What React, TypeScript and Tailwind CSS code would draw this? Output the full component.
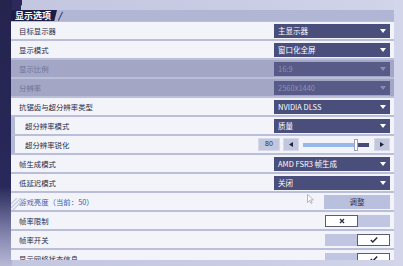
import React from "react";

type Kind = "select" | "disabled" | "slider" | "button" | "off" | "on";

type Row = {
  label: string;
  kind: Kind;
  value?: string;
  indent?: boolean;
  highlight?: boolean;
};

const rows: Row[] = [
  { label: "目标显示器", kind: "select", value: "主显示器" },
  { label: "显示模式", kind: "select", value: "窗口化全屏" },
  { label: "显示比例", kind: "disabled", value: "16:9" },
  { label: "分辨率", kind: "disabled", value: "2560x1440" },
  { label: "抗锯齿与超分辨率类型", kind: "select", value: "NVIDIA DLSS" },
  { label: "超分辨率模式", kind: "select", value: "质量", indent: true },
  { label: "超分辨率锐化", kind: "slider", value: "80", indent: true },
  { label: "帧生成模式", kind: "select", value: "AMD FSR3 帧生成" },
  { label: "低延迟模式", kind: "select", value: "关闭" },
  { label: "游戏亮度（当前：50）", kind: "button", value: "调整", highlight: true },
  { label: "帧率限制", kind: "off" },
  { label: "帧率开关", kind: "on" },
  { label: "显示网络状态信息", kind: "on" },
];

function Caret({ dim }: { dim?: boolean }) {
  return (
    <svg width="6" height="4" viewBox="0 0 6 4">
      <path d="M0 0h6L3 4z" fill={dim ? "#8a8db0" : "#ffffff"} />
    </svg>
  );
}

function Dropdown({ value, dim }: { value: string; dim?: boolean }) {
  return (
    <div
      className={`w-[116px] h-[14px] flex items-center justify-between pl-[4px] pr-[4px] text-[7.5px] leading-none ${
        dim ? "bg-[#585b88] text-[#8d90b2]" : "bg-[#4a4e7b] text-white"
      }`}
    >
      <span>{value}</span>
      <Caret dim={dim} />
    </div>
  );
}

function Slider({ value }: { value: string }) {
  return (
    <div className="flex items-center h-[13px]">
      <div className="w-[22px] h-[13px] bg-[#c3c7de] border border-[#d6d9ea] flex items-center justify-center text-[7px] text-[#2d2f4d] font-['Liberation_Sans',sans-serif]">
        {value}
      </div>
      <div className="ml-[3px] w-[16px] h-[13px] bg-[#c3c7de] border border-[#d6d9ea] flex items-center justify-center">
        <svg width="4" height="5" viewBox="0 0 4 5">
          <path d="M4 0v5L0 2.5z" fill="#23243d" />
        </svg>
      </div>
      <div className="ml-[4px] w-[66px] h-[4px] bg-[#474b78] relative">
        <div className="h-full w-[53px] bg-[#95b9ea]" />
        <div className="absolute left-[51px] top-[-4px] w-[4px] h-[12px] bg-white border border-[#9aa0bd]" />
      </div>
      <div className="ml-[5px] w-[16px] h-[13px] bg-[#c3c7de] border border-[#d6d9ea] flex items-center justify-center">
        <svg width="4" height="5" viewBox="0 0 4 5">
          <path d="M0 0v5L4 2.5z" fill="#23243d" />
        </svg>
      </div>
    </div>
  );
}

function Toggle({ on }: { on: boolean }) {
  const box = (
    <div className="w-[33px] h-full bg-white border border-[#5a5d72] flex items-center justify-center">
      {on ? (
        <svg width="8" height="6" viewBox="0 0 8 6">
          <path d="M0.8 3l2 2L7.2 0.6" stroke="#23243d" strokeWidth="1.4" fill="none" />
        </svg>
      ) : (
        <svg width="6" height="6" viewBox="0 0 6 6">
          <path d="M1 1l4 4M5 1L1 5" stroke="#2b2c48" strokeWidth="1.3" />
        </svg>
      )}
    </div>
  );
  return (
    <div className="w-[65px] h-[12px] flex bg-[#c0c6e1]">
      {on ? (
        <>
          <div className="flex-1" />
          {box}
        </>
      ) : (
        <>
          {box}
          <div className="flex-1" />
        </>
      )}
    </div>
  );
}

function SettingRow({ row }: { row: Row }) {
  const dim = row.kind === "disabled";
  return (
    <div className={`relative h-[17px] shrink-0 flex items-center ${dim ? "bg-[#a3a6c5]" : "bg-[#f3f4f9]"}`}>
      {row.indent && <div className="w-[4px] h-full bg-[#b4b9d7]" />}
      <span
        className={`text-[7.4px] leading-none ${row.indent ? "ml-[10px]" : "ml-[8px]"} ${
          dim ? "text-[#6f7398]" : row.highlight ? "text-[#3c5cae]" : "text-[#2a2c48]"
        }`}
      >
        {row.label}
      </span>
      {row.highlight && (
        <svg className="absolute left-0 bottom-0" width="14" height="12" viewBox="0 0 14 12">
          <path d="M0 6L6 0M0 10L10 0M0 14L14 0" stroke="#c5cbe3" strokeWidth="1.3" />
        </svg>
      )}
      <div className="ml-auto mr-[4px] flex items-center">
        {(row.kind === "select" || row.kind === "disabled") && <Dropdown value={row.value!} dim={dim} />}
        {row.kind === "slider" && <Slider value={row.value!} />}
        {row.kind === "button" && (
          <div className="w-[66px] h-[14px] bg-[#b9c0dd] flex items-center justify-center text-[7.5px] text-[#2d2f4d]">
            {row.value}
          </div>
        )}
        {row.kind === "off" && <Toggle on={false} />}
        {row.kind === "on" && <Toggle on />}
      </div>
    </div>
  );
}

export default function App() {
  return (
    <div className="relative w-[403px] h-[266px] overflow-hidden bg-[linear-gradient(90deg,#c3c6df_0%,#c9cce3_60%,#d2d5ea_100%)] font-['Noto_Sans_CJK_SC',sans-serif]">
      {/* left dark strip */}
      <div className="absolute left-0 top-0 w-[12px] h-full bg-[linear-gradient(180deg,#25244f_0%,#28285a_70%,#8c8db6_90%,#b7b9d6_100%)]" />
      <div className="absolute left-[12px] top-0 w-[24px] h-[10px] bg-[linear-gradient(100deg,#2b2a5a_40%,transparent_41%)]" />
      {/* right light strip */}
      <div className="absolute right-0 top-0 w-[9px] h-full bg-[#d3d6ea]" />

      <div className="relative ml-[11px] w-[383px] pt-[10px]">
        <div className="h-[11px] bg-[#b2b6d5] flex items-center">
          <div className="h-full bg-[#1d1e46] pl-[4px] pr-[6px] flex items-center [clip-path:polygon(0_0,100%_0,94%_100%,0_100%)]">
            <span className="text-[9px] leading-none font-bold text-white">显示选项</span>
          </div>
          <span className="ml-[1px] text-[9px] leading-none text-[#1d1e46] italic font-bold">/</span>
        </div>
        <div className="pt-[1px] h-[239px] overflow-hidden flex flex-col gap-[2px] bg-[#babed9]">
          {rows.map((r) => (
            <SettingRow key={r.label} row={r} />
          ))}
        </div>
      </div>

      {/* mouse pointer */}
      <svg className="absolute left-[307px] top-[194px]" width="7" height="10" viewBox="0 0 7 10">
        <path d="M0.5 0.5v8l2-2 1.5 3 1.2-0.6-1.5-3H6.5z" fill="#ffffff" stroke="#9a9cae" strokeWidth="0.7" />
      </svg>
    </div>
  );
}
